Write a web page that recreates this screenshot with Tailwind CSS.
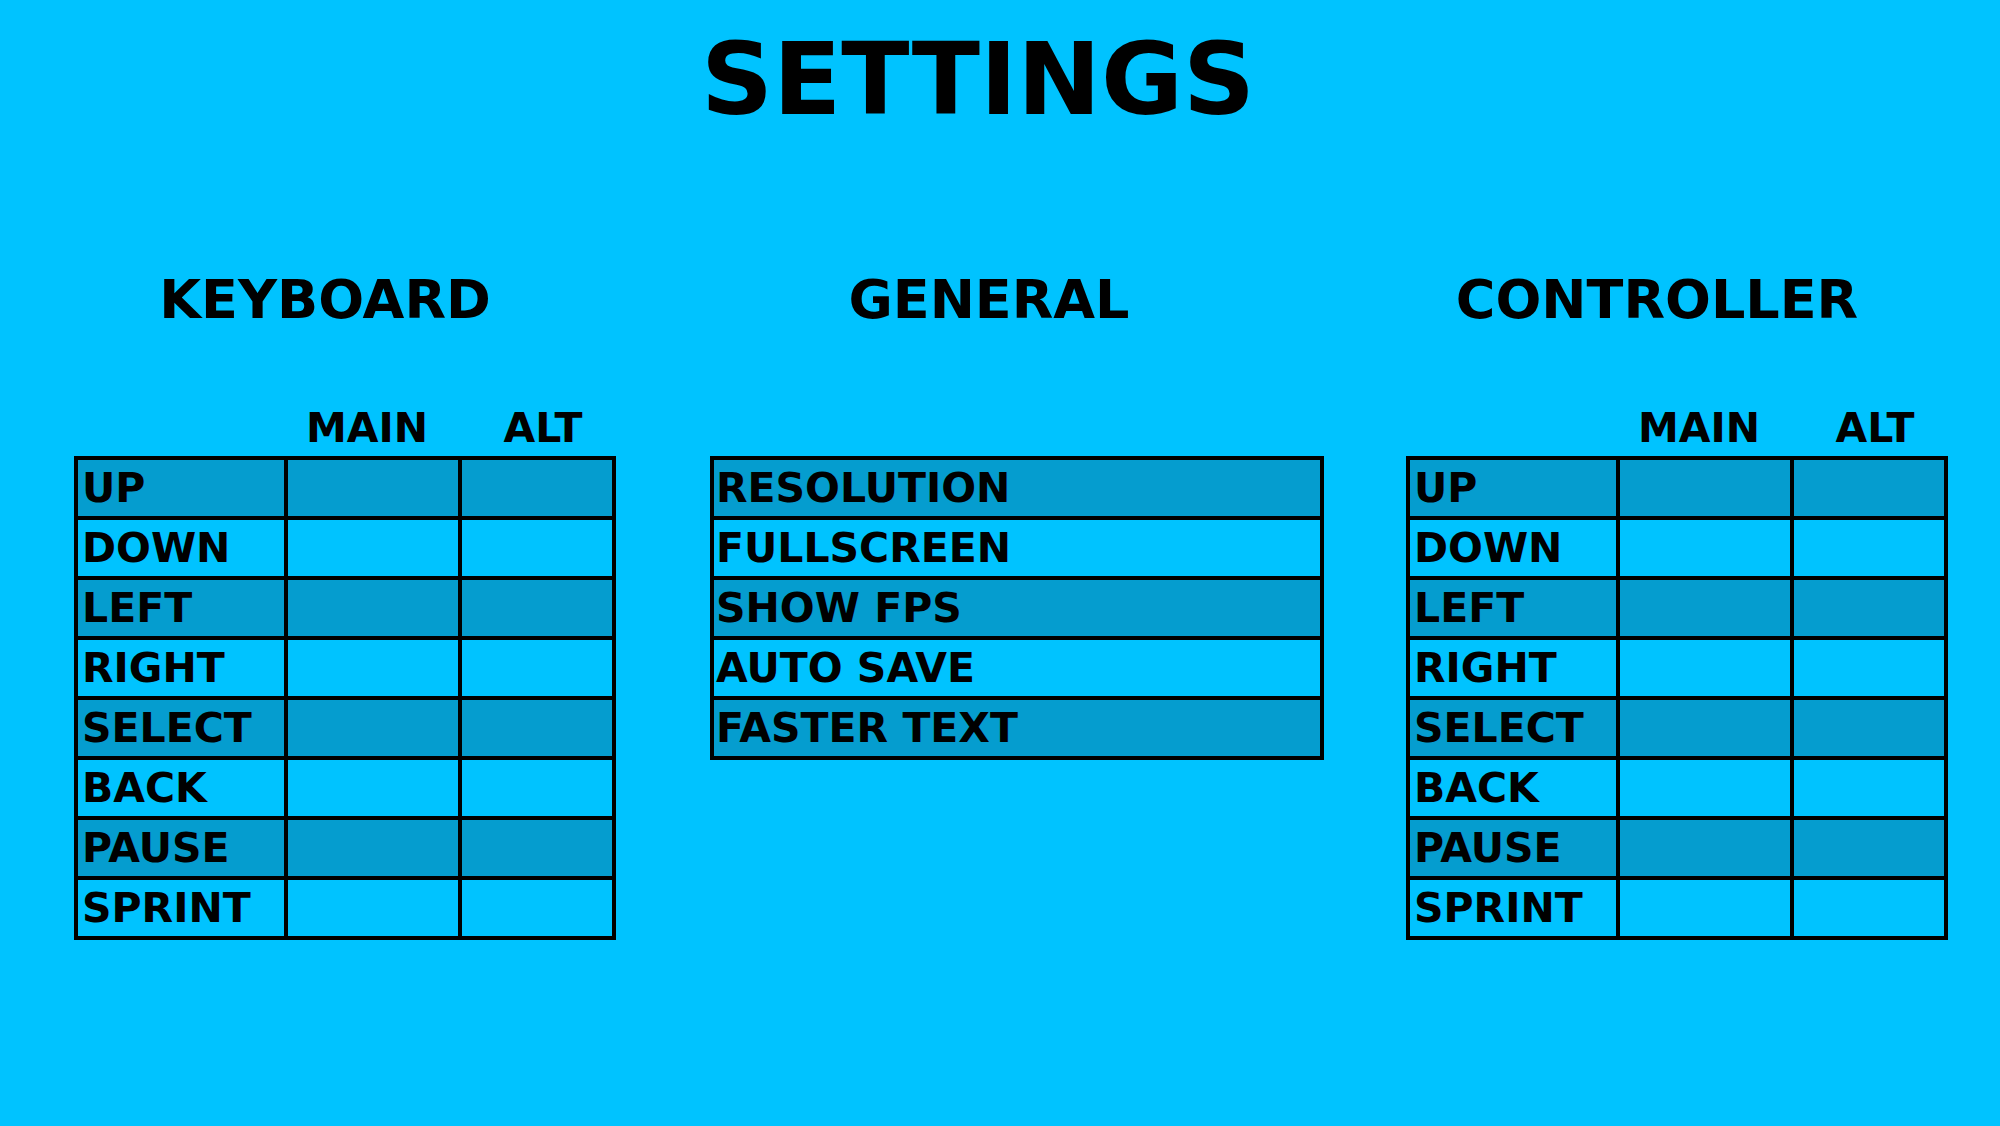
<!DOCTYPE html>
<html lang="en">
<head>
<meta charset="utf-8">
<meta name="viewport" content="width=device-width, initial-scale=1">
<title>Settings</title>
<script src="https://cdn.jsdelivr.net/npm/@tailwindcss/browser@4"></script>
</head>
<body class="min-h-screen bg-[#00c3ff] pt-8 font-['DejaVu_Sans',sans-serif] font-bold text-black">
<h1 class="pr-11 text-center text-[100px] leading-[96px]">SETTINGS</h1>
<main class="mt-36 flex items-start">
  <section class="ml-[3.7%] w-[27.1%]" aria-labelledby="keyboard">
    <h2 id="keyboard" class="pr-10 text-center text-[54px] leading-[56px]">KEYBOARD</h2>
    <table class="mt-[72px] w-full table-fixed border-collapse text-[41px] leading-[56px]" aria-labelledby="keyboard">
      <colgroup><col class="w-[39%]"><col class="w-[32.4%]"><col></colgroup>
      <thead><tr class="h-[58px]"><td></td><th scope="col" class="pr-3">MAIN</th><th scope="col" class="pl-3">ALT</th></tr></thead>
      <tbody class="[&>tr]:h-[60px] [&>tr:nth-child(odd)]:bg-[#059dcf] [&_th]:border-4 [&_th]:border-black [&_th]:p-0 [&_th]:pl-1 [&_th]:text-left [&_td]:border-4 [&_td]:border-black [&_td]:p-0 [&_button]:block [&_button]:h-14 [&_button]:w-full">
        <tr><th scope="row">UP</th><td><button aria-label="Up, main key"></button></td><td><button aria-label="Up, alternate key"></button></td></tr>
        <tr><th scope="row">DOWN</th><td><button aria-label="Down, main key"></button></td><td><button aria-label="Down, alternate key"></button></td></tr>
        <tr><th scope="row">LEFT</th><td><button aria-label="Left, main key"></button></td><td><button aria-label="Left, alternate key"></button></td></tr>
        <tr><th scope="row">RIGHT</th><td><button aria-label="Right, main key"></button></td><td><button aria-label="Right, alternate key"></button></td></tr>
        <tr><th scope="row">SELECT</th><td><button aria-label="Select, main key"></button></td><td><button aria-label="Select, alternate key"></button></td></tr>
        <tr><th scope="row">BACK</th><td><button aria-label="Back, main key"></button></td><td><button aria-label="Back, alternate key"></button></td></tr>
        <tr><th scope="row">PAUSE</th><td><button aria-label="Pause, main key"></button></td><td><button aria-label="Pause, alternate key"></button></td></tr>
        <tr><th scope="row">SPRINT</th><td><button aria-label="Sprint, main key"></button></td><td><button aria-label="Sprint, alternate key"></button></td></tr>
      </tbody>
    </table>
  </section>

  <section class="ml-[4.7%] w-[30.7%]" aria-labelledby="general">
    <h2 id="general" class="pr-14 text-center text-[54px] leading-[56px]">GENERAL</h2>
    <ul class="mt-32 divide-y-4 divide-black border-4 border-black text-[41px] leading-[56px] [&>li:nth-child(odd)]:bg-[#059dcf] [&_button]:block [&_button]:h-14 [&_button]:w-full [&_button]:pl-0.5 [&_button]:text-left">
      <li><button>RESOLUTION</button></li>
      <li><button>FULLSCREEN</button></li>
      <li><button>SHOW FPS</button></li>
      <li><button>AUTO SAVE</button></li>
      <li><button>FASTER TEXT</button></li>
    </ul>
  </section>

  <section class="ml-[4.1%] w-[27.1%]" aria-labelledby="controller">
    <h2 id="controller" class="pr-10 text-center text-[54px] leading-[56px]">CONTROLLER</h2>
    <table class="mt-[72px] w-full table-fixed border-collapse text-[41px] leading-[56px]" aria-labelledby="controller">
      <colgroup><col class="w-[39%]"><col class="w-[32.4%]"><col></colgroup>
      <thead><tr class="h-[58px]"><td></td><th scope="col" class="pr-3">MAIN</th><th scope="col" class="pl-3">ALT</th></tr></thead>
      <tbody class="[&>tr]:h-[60px] [&>tr:nth-child(odd)]:bg-[#059dcf] [&_th]:border-4 [&_th]:border-black [&_th]:p-0 [&_th]:pl-1 [&_th]:text-left [&_td]:border-4 [&_td]:border-black [&_td]:p-0 [&_button]:block [&_button]:h-14 [&_button]:w-full">
        <tr><th scope="row">UP</th><td><button aria-label="Up, main button"></button></td><td><button aria-label="Up, alternate button"></button></td></tr>
        <tr><th scope="row">DOWN</th><td><button aria-label="Down, main button"></button></td><td><button aria-label="Down, alternate button"></button></td></tr>
        <tr><th scope="row">LEFT</th><td><button aria-label="Left, main button"></button></td><td><button aria-label="Left, alternate button"></button></td></tr>
        <tr><th scope="row">RIGHT</th><td><button aria-label="Right, main button"></button></td><td><button aria-label="Right, alternate button"></button></td></tr>
        <tr><th scope="row">SELECT</th><td><button aria-label="Select, main button"></button></td><td><button aria-label="Select, alternate button"></button></td></tr>
        <tr><th scope="row">BACK</th><td><button aria-label="Back, main button"></button></td><td><button aria-label="Back, alternate button"></button></td></tr>
        <tr><th scope="row">PAUSE</th><td><button aria-label="Pause, main button"></button></td><td><button aria-label="Pause, alternate button"></button></td></tr>
        <tr><th scope="row">SPRINT</th><td><button aria-label="Sprint, main button"></button></td><td><button aria-label="Sprint, alternate button"></button></td></tr>
      </tbody>
    </table>
  </section>
</main>
</body>
</html>
